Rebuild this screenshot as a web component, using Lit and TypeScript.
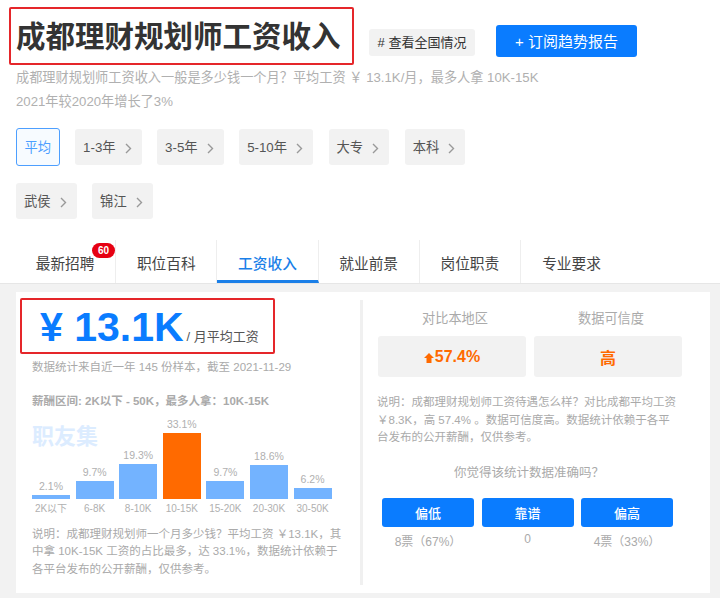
import { LitElement, html, css } from "lit";
import { customElement } from "lit/decorators.js";

const filters = ["1-3年", "3-5年", "5-10年", "大专", "本科", "武侯", "锦江"];
const tabs = ["最新招聘", "职位百科", "工资收入", "就业前景", "岗位职责", "专业要求"];
const bars = [
  { label: "2K以下", pct: "2.1%", h: 4 },
  { label: "6-8K", pct: "9.7%", h: 18 },
  { label: "8-10K", pct: "19.3%", h: 35 },
  { label: "10-15K", pct: "33.1%", h: 66, hot: true },
  { label: "15-20K", pct: "9.7%", h: 18 },
  { label: "20-30K", pct: "18.6%", h: 34 },
  { label: "30-50K", pct: "6.2%", h: 11 },
];
const votes = [
  { name: "偏低", count: "8票（67%）" },
  { name: "靠谱", count: "0" },
  { name: "偏高", count: "4票（33%）" },
];

@customElement("app-root")
export class AppRoot extends LitElement {
  static styles = css`
    :host {
      display: block;
      width: 720px;
      height: 598px;
      overflow: hidden;
      background: #fff;
      font-family: "Liberation Sans", "Noto Sans CJK SC", sans-serif;
      color: #aaa;
    }
    .head {
      display: flex;
      align-items: flex-start;
      padding: 7px 0 0 9px;
    }
    .title {
      box-sizing: border-box;
      width: 345px;
      height: 58px;
      margin: 0;
      padding: 2px 0 0 5px;
      border: 2px solid #e5262a;
      border-radius: 2px;
      font-size: 29.5px;
      line-height: 52px;
      font-weight: 700;
      color: #333;
      white-space: nowrap;
    }
    .nation {
      margin: 22px 0 0 15px;
      width: 106px;
      height: 27px;
      line-height: 28px;
      text-align: center;
      background: #f2f2f2;
      border-radius: 3px;
      font-size: 13px;
      color: #333;
    }
    .subscribe {
      margin: 18px 0 0 21px;
      width: 141px;
      height: 32px;
      line-height: 33px;
      text-align: center;
      background: #0a7cff;
      border-radius: 3px;
      font-size: 15px;
      color: #fff;
    }
    .sub {
      padding: 1px 0 0 16px;
      font-size: 13.2px;
      line-height: 24px;
      color: #b0b0b0;
    }
    .filters {
      display: flex;
      flex-wrap: wrap;
      align-items: center;
      gap: 17px 15.5px;
      width: 480px;
      padding: 14px 0 0 16px;
    }
    .filter {
      display: flex;
      align-items: center;
      justify-content: space-between;
      box-sizing: border-box;
      height: 36px;
      padding: 2px 10px 0 8px;
      gap: 9px;
      background: #f2f2f2;
      border-radius: 3px;
      font-size: 13.3px;
      line-height: 34px;
      color: #555;
    }
    .filter svg {
      width: 7px;
      height: 11px;
    }
    .filter.on {
      height: 38px;
      padding: 2px 7.5px 0;
      background: #f7fbff;
      border: 1px solid #4d9fff;
      color: #4d9fff;
    }
    .tabs {
      display: flex;
      height: 43px;
      margin-top: 21px;
      padding-left: 15px;
      border-bottom: 1px solid #e6e6e6;
    }
    .tab {
      position: relative;
      box-sizing: border-box;
      width: 101.2px;
      height: 43px;
      padding-top: 12px;
      line-height: 24px;
      text-align: center;
      font-size: 14.7px;
      color: #444;
      border-right: 1px solid #eee;
    }
    .tab:last-child {
      border-right: none;
    }
    .tab.on {
      color: #1a7fe8;
      font-weight: 500;
      border-bottom: 3px solid #1a7fe8;
    }
    .badge {
      position: absolute;
      left: 77px;
      top: 3px;
      width: 23px;
      height: 15px;
      line-height: 15px;
      border-radius: 8px;
      background: #e60012;
      color: #fff;
      font-size: 10px;
      font-weight: 700;
      text-align: center;
    }
    .body {
      background: #f2f2f2;
      padding: 8px 10px 5px 16px;
    }
    .panel {
      display: flex;
      height: 301px;
      background: #fff;
    }
    .left {
      box-sizing: border-box;
      width: 344px;
      padding: 6px 0 0 4px;
    }
    .divider {
      width: 3px;
      margin: 8px 0;
      background: #f0f0f0;
    }
    .right {
      box-sizing: border-box;
      width: 347px;
      padding: 18px 0 0 14px;
    }
    .avg {
      display: flex;
      align-items: baseline;
      box-sizing: border-box;
      width: 255px;
      height: 56px;
      padding: 3px 0 0 18px;
      border: 2px solid #e5262a;
      border-radius: 2px;
      font-size: 13px;
      line-height: 49px;
      color: #555;
    }
    .avg b {
      font-size: 41px;
      color: #0a7cff;
      margin-right: 3px;
      white-space: pre;
    }
    .note {
      margin: 0 0 0 12px;
      font-size: 11.5px;
      line-height: 17.5px;
      color: #aaa;
    }
    .stamp {
      padding-top: 5px;
    }
    .range {
      margin: 15px 0 0 12px;
      font-size: 11.5px;
      line-height: 18px;
      font-weight: 700;
      color: #aaa;
    }
    .chart {
      position: relative;
      display: flex;
      align-items: flex-end;
      gap: 5.6px;
      height: 108px;
      margin-left: 12px;
    }
    .mark {
      position: absolute;
      left: 0;
      top: 14px;
      font-size: 22px;
      line-height: 26px;
      font-weight: 700;
      color: #dcecff;
    }
    .col {
      position: relative;
      display: flex;
      flex-direction: column;
      align-items: center;
      width: 38px;
      font-size: 10px;
      color: #b0b0b0;
    }
    .col .pct {
      font-size: 10.5px;
      line-height: 14px;
    }
    .bar {
      width: 38px;
      margin-top: 2px;
      background: #73b3ff;
    }
    .bar.hot {
      background: #ff6a00;
    }
    .col .name {
      height: 19px;
      line-height: 19px;
      white-space: nowrap;
    }
    .desc {
      margin-top: 8px;
      width: 313px;
    }
    .compare {
      display: grid;
      grid-template-columns: 148px 148px;
      gap: 0 8px;
      margin-left: 1px;
    }
    .compare h4 {
      margin: 0;
      padding-left: 6px;
      font-weight: 400;
      font-size: 13.2px;
      line-height: 18px;
      text-align: center;
      color: #aaa;
    }
    .value {
      display: flex;
      align-items: center;
      justify-content: center;
      gap: 1px;
      height: 41px;
      margin-top: 8px;
      background: #f2f2f2;
      border-radius: 3px;
      color: #ff6a00;
      font-size: 16px;
      font-weight: 700;
    }
    .value svg {
      width: 10px;
      height: 10px;
      margin-top: 3px;
    }
    .explain {
      margin: 17px 0 0 0;
      width: 302px;
    }
    .ask {
      margin-top: 17px;
      width: 304px;
      font-size: 12.5px;
      line-height: 18px;
      text-align: center;
      color: #aaa;
    }
    .votes {
      display: flex;
      gap: 7.5px;
      margin: 16px 0 0 5px;
    }
    .vote {
      width: 92px;
      font-size: 12px;
      color: #aaa;
      text-align: center;
    }
    .vote button {
      display: block;
      width: 92px;
      height: 29px;
      margin-bottom: 5px;
      padding: 0;
      border: none;
      border-radius: 3px;
      background: #0a7cff;
      color: #fff;
      font: inherit;
      font-size: 13px;
      font-weight: 500;
    }
  `;

  chevron() {
    return html`<svg viewBox="0 0 7 11"><path d="M1 1l4.5 4.5L1 10" fill="none" stroke="#999" stroke-width="1.4"/></svg>`;
  }

  render() {
    return html`
      <div class="head">
        <h1 class="title">成都理财规划师工资收入</h1>
        <div class="nation"># 查看全国情况</div>
        <div class="subscribe">+ 订阅趋势报告</div>
      </div>
      <div class="sub">
        成都理财规划师工资收入一般是多少钱一个月？平均工资 ￥ 13.1K/月，最多人拿 10K-15K<br />2021年较2020年增长了3%
      </div>
      <div class="filters">
        <div class="filter on">平均</div>
        ${filters.map((f) => html`<div class="filter">${f}${this.chevron()}</div>`)}
      </div>
      <div class="tabs">
        ${tabs.map(
          (t, i) => html`<div class="tab ${i === 2 ? "on" : ""}">
            ${t}${i === 0 ? html`<span class="badge">60</span>` : ""}
          </div>`
        )}
      </div>
      <div class="body">
        <div class="panel">
          <div class="left">
            <div class="avg"><b>¥ 13.1K</b>/ 月平均工资</div>
            <p class="note stamp">数据统计来自近一年 145 份样本，截至 2021-11-29</p>
            <div class="range">薪酬区间: 2K以下 - 50K，最多人拿：10K-15K</div>
            <div class="chart">
              <div class="mark">职友集</div>
              ${bars.map(
                (b) => html`<div class="col">
                  <span class="pct">${b.pct}</span>
                  <div class="bar ${b.hot ? "hot" : ""}" style="height:${b.h}px"></div>
                  <span class="name">${b.label}</span>
                </div>`
              )}
            </div>
            <p class="note desc">
              说明：成都理财规划师一个月多少钱？平均工资 ￥13.1K，其中拿 10K-15K 工资的占比最多，达 33.1%，数据统计依赖于各平台发布的公开薪酬，仅供参考。
            </p>
          </div>
          <div class="divider"></div>
          <div class="right">
            <div class="compare">
              <div>
                <h4>对比本地区</h4>
                <div class="value">
                  <svg viewBox="0 0 10 10"><path d="M5 0l5 5H7.5v5h-5V5H0z" fill="#ff6a00"/></svg>57.4%
                </div>
              </div>
              <div>
                <h4>数据可信度</h4>
                <div class="value">高</div>
              </div>
            </div>
            <p class="note explain">
              说明：成都理财规划师工资待遇怎么样？对比成都平均工资 ￥8.3K，高 57.4% 。数据可信度高。数据统计依赖于各平台发布的公开薪酬，仅供参考。
            </p>
            <div class="ask">你觉得该统计数据准确吗？</div>
            <div class="votes">
              ${votes.map(
                (v) => html`<div class="vote"><button>${v.name}</button>${v.count}</div>`
              )}
            </div>
          </div>
        </div>
      </div>
    `;
  }
}
